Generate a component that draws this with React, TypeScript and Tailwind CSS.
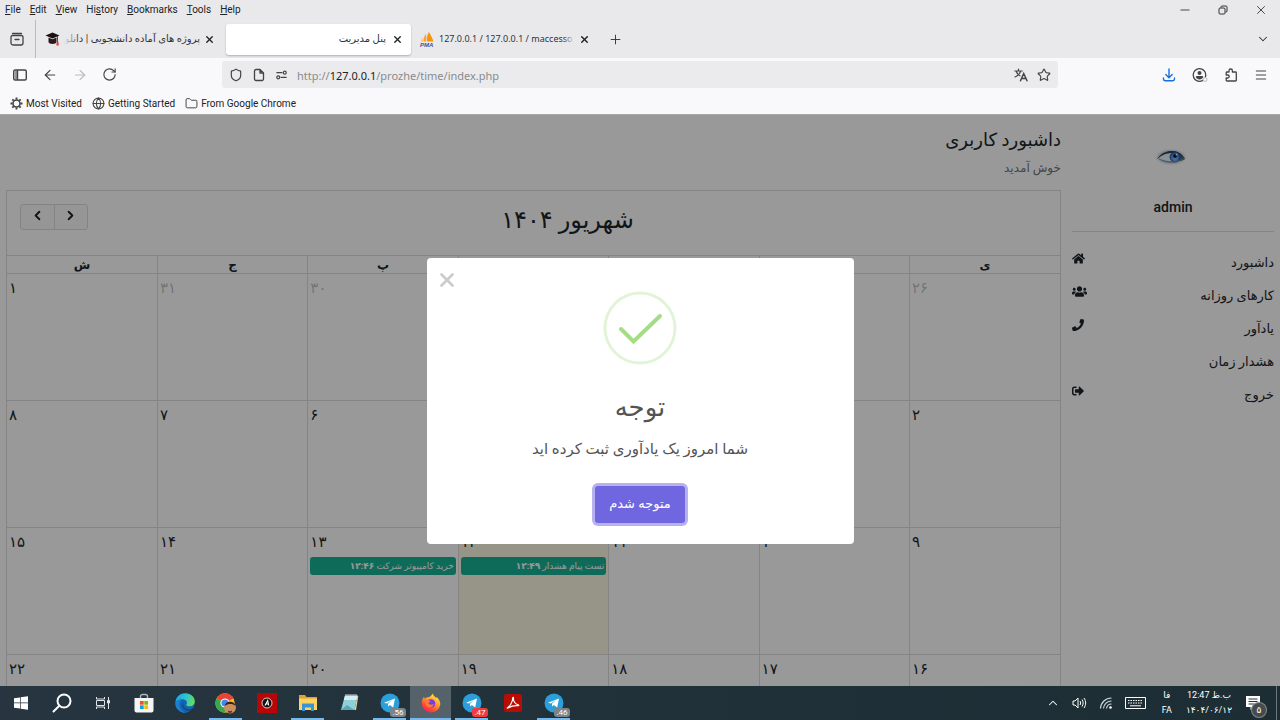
import type { ReactNode } from "react";
import { FaHome, FaUsers, FaPhone, FaSignOutAlt } from "react-icons/fa";
import {
  ArrowLeft,
  ArrowRight,
  ChevronDown,
  ChevronLeft,
  ChevronRight,
  ChevronUp,
  Folder,
  Globe,
  Menu,
  Minus,
  Plus,
  RotateCw,
  Shield,
  Star,
  X,
} from "lucide-react";

const uiFont = "font-['Roboto','DejaVu_Sans',sans-serif]";

const menus: [string, string, string][] = [
  ["", "F", "ile"],
  ["", "E", "dit"],
  ["", "V", "iew"],
  ["Hi", "s", "tory"],
  ["", "B", "ookmarks"],
  ["", "T", "ools"],
  ["", "H", "elp"],
];

function MenuBar() {
  return (
    <div className="flex h-5 shrink-0 items-center justify-between bg-[#e9e9ec]">
      <nav className="flex items-center gap-[9px] pl-[5px] text-[10px] leading-4 text-[#222]">
        {menus.map(([a, b, c]) => (
          <button key={b + c} type="button">
            {a}
            <span className="underline underline-offset-1">{b}</span>
            {c}
          </button>
        ))}
      </nav>
      <div className="flex items-center gap-6 pr-3 text-[#333]">
        <button type="button" aria-label="Minimize">
          <Minus size={14} strokeWidth={1.5} />
        </button>
        <button type="button" aria-label="Restore">
          <svg width="14" height="14" viewBox="0 0 14 14" fill="none" stroke="currentColor" strokeWidth="1">
            <rect x="3" y="5" width="6" height="6" rx="1" />
            <path d="M5 4.500V4a1 1 0 0 1 1-1h4a1 1 0 0 1 1 1v4a1 1 0 0 1-1 1H9.500" />
          </svg>
        </button>
        <button type="button" aria-label="Close window">
          <X size={14} strokeWidth={1.5} />
        </button>
      </div>
    </div>
  );
}

function TabClose() {
  return (
    <button type="button" aria-label="Close tab" className="shrink-0 text-[#222]">
      <X size={11} strokeWidth={3} />
    </button>
  );
}

function TabBar() {
  return (
    <div className="flex h-[38px] shrink-0 items-center bg-[#e9e9ec] text-[10px] text-[#333]">
      <button type="button" aria-label="Recent tabs" className="flex h-full w-9 items-center justify-center border-r border-[#bbb] pr-0.5">
        <svg width="16" height="16" viewBox="0 0 16 16" fill="none" stroke="#444" strokeWidth="1.300">
          <path d="M3.500 2.500h9M2 6a1.500 1.500 0 0 1 1.500-1.500h9A1.500 1.500 0 0 1 14 6v6a2 2 0 0 1-2 2H4a2 2 0 0 1-2-2ZM6 8.500h4" strokeLinecap="round" />
        </svg>
      </button>
      <div className="flex h-8 w-[190px] items-center gap-1 pr-[11px] pl-[9px]">
        <svg width="15" height="14" viewBox="0 0 15 14" className="shrink-0">
          <path d="M7.500.5 14.500 3.500 7.500 6.500.5 3.500Z" fill="#1b1214" />
          <path d="M3.500 5.500v4.500c0 2.500 8 2.500 8 0V5.500l-4 1.800Z" fill="#2a1a1c" />
          <path d="M12.500 4v6" stroke="#b02323" strokeWidth="1" />
          <path d="M11.800 9.500h1.600l.4 4h-2.400Z" fill="#e03a3a" />
        </svg>
        <span dir="rtl" className="relative min-w-0 flex-1 leading-4 whitespace-nowrap">
          پروژه های آماده دانشجویی | دانلو
          <span className="absolute inset-y-0 left-0 w-4 bg-linear-to-r from-[#e9e9ec] to-transparent" />
        </span>
        <TabClose />
      </div>
      <div className="flex h-[31px] w-[185px] items-center gap-1 rounded-[3px] bg-white px-2 shadow-[0_1px_2px_rgba(0,0,0,0.25)]">
        <span dir="rtl" className="min-w-0 flex-1 px-0.5 leading-4">
          پنل مدیریت
        </span>
        <TabClose />
      </div>
      <div className="flex h-8 w-[187px] items-center gap-1 px-2">
        <svg width="16" height="16" viewBox="0 0 16 16" className="shrink-0">
          <path d="M4.500 10.500C4.500 7 5.500 4.500 7 3c.5 2.500.5 5 .2 7.500Z" fill="#f9a13a" />
          <path d="M8 10.500C7.800 6 8.500 3 10 1c1.500 3 3.500 6 4.500 9.500Z" fill="#f89406" />
          <path d="M1.500 10.500 4 6.500v4Z" fill="#fbc277" />
          <text x="1" y="15.500" fontSize="6" fontWeight="700" fontStyle="italic" fill="#4a4f8c" fontFamily="Liberation Sans">
            PMA
          </text>
        </svg>
        <span className="relative min-w-0 flex-1 font-['Noto_Sans',sans-serif] text-[9px] leading-4 whitespace-nowrap">
          127.0.0.1 / 127.0.0.1 / maccesso
          <span className="absolute inset-y-0 right-0 w-3 bg-linear-to-l from-[#e9e9ec] to-transparent" />
        </span>
        <TabClose />
      </div>
      <button type="button" aria-label="New tab" className="ml-2.5">
        <Plus size={15} strokeWidth={1.5} />
      </button>
      <button type="button" aria-label="List all tabs" className="mr-2.5 ml-auto">
        <ChevronDown size={14} strokeWidth={1.8} />
      </button>
    </div>
  );
}

function NavBar() {
  return (
    <div className="flex h-[33px] shrink-0 items-center bg-[#f9f9fb] text-[#444]">
      <div className="flex w-[222px] shrink-0 items-center gap-3.5 pl-3">
        <button type="button" aria-label="Sidebar">
          <svg width="16" height="16" viewBox="0 0 16 16" fill="none" stroke="#444" strokeWidth="1.400">
            <rect x="1.700" y="3" width="12.600" height="10" rx="1.500" />
            <path d="M2.500 4h2.500v8H2.500Z" fill="#999" stroke="none" />
            <path d="M5.500 3v10" />
          </svg>
        </button>
        <button type="button" aria-label="Back">
          <ArrowLeft size={16} strokeWidth={1.8} />
        </button>
        <button type="button" aria-label="Forward" className="text-[#bbb]">
          <ArrowRight size={16} strokeWidth={1.8} />
        </button>
        <button type="button" aria-label="Reload">
          <RotateCw size={15} strokeWidth={1.8} />
        </button>
      </div>
      <div className="flex h-[27px] min-w-0 flex-1 items-center gap-[9px] rounded-[3px] bg-[#ebebed] px-[7px]">
        <Shield size={14} strokeWidth={2} className="shrink-0" />
        <svg width="14" height="14" viewBox="0 0 14 14" fill="none" stroke="currentColor" strokeWidth="1.300" strokeLinejoin="round" className="shrink-0">
          <path d="M8 1.500H4a1.500 1.500 0 0 0-1.500 1.500v8A1.500 1.500 0 0 0 4 12.500h6a1.500 1.500 0 0 0 1.500-1.500V5ZM8 1.500V5h3.500" />
        </svg>
        <svg width="13" height="14" viewBox="0 0 14 14" fill="none" stroke="currentColor" strokeWidth="1.300" className="shrink-0">
          <path d="M1.500 4.500H8M6 9.500h6.500" />
          <circle cx="10.500" cy="4.500" r="1.600" />
          <circle cx="3.500" cy="9.500" r="1.600" />
        </svg>
        <div className="min-w-0 flex-1 pt-0.5 font-['Noto_Sans',sans-serif] text-[11px] leading-5 text-[#8a8a8e]">
          http://<span className="text-[#222]">127.0.0.1</span>/prozhe/time/index.php
        </div>
        <button type="button" aria-label="Translate page" className="shrink-0">
          <svg width="14" height="14" viewBox="0 0 14 14" fill="none" stroke="currentColor" strokeWidth="1.200" strokeLinecap="round">
            <path d="M.8 3h7.400M4.500 1.200V3M6.700 3.200C6 5.500 3.700 7.800 1 9M2.400 3.500C3 5.300 4.500 7 6 7.800" />
            <path d="M6.500 12.800 9.700 5.500l3.300 7.300M7.700 10.500h4.100" strokeWidth="1.500" />
          </svg>
        </button>
        <button type="button" aria-label="Bookmark page" className="shrink-0">
          <Star size={14} strokeWidth={2} />
        </button>
      </div>
      <div className="flex w-[222px] shrink-0 items-center justify-end gap-4 pr-3">
        <button type="button" aria-label="Downloads">
          <svg width="14" height="14" viewBox="0 0 14 14" fill="none" stroke="#1a6fe0" strokeWidth="1.400" strokeLinecap="round" strokeLinejoin="round">
            <path d="M7 1v8.500M3.800 6.500 7 9.700l3.200-3.200M1.500 10v1a1.700 1.700 0 0 0 1.700 1.700h7.600a1.700 1.700 0 0 0 1.700-1.700v-1" />
          </svg>
        </button>
        <button type="button" aria-label="Account">
          <svg width="16" height="16" viewBox="0 0 16 16" fill="none" stroke="#444" strokeWidth="1.300">
            <circle cx="7.500" cy="8" r="6.300" />
            <circle cx="7.500" cy="6" r="2" fill="#444" stroke="none" />
            <path d="M3.800 10a1 1 0 0 1 1-1h5.400a1 1 0 0 1 1 1c-.5 1.500-2 2.500-3.700 2.500S4.300 11.500 3.800 10Z" fill="#444" stroke="none" />
            <circle cx="13" cy="12.500" r="2" fill="#f9f9fb" stroke="#bbb" strokeWidth="1" />
          </svg>
        </button>
        <button type="button" aria-label="Extensions">
          <svg width="14" height="14" viewBox="0 0 14 14" fill="none" stroke="#444" strokeWidth="1.300" strokeLinejoin="round">
            <path d="M5 4V2.700a1.700 1.700 0 0 1 3.400 0V4h3.100a.8.8 0 0 1 .8.8v7.400a.8.8 0 0 1-.8.8H3a.8.8 0 0 1-.8-.8V10h1.500a1.500 1.500 0 0 0 0-3H2.200V4.800A.8.8 0 0 1 3 4Z" />
          </svg>
        </button>
        <button type="button" aria-label="Application menu">
          <Menu size={14} strokeWidth={1.8} />
        </button>
      </div>
    </div>
  );
}

function GearIcon() {
  return (
    <svg width="13" height="13" viewBox="0 0 13 13" fill="none" stroke="#444">
      <circle cx="6.500" cy="6.500" r="3.500" strokeWidth="1.600" />
      <path d="M6.500.5v2M6.500 10.500v2M.5 6.500h2M10.500 6.500h2M2.300 2.300l1.400 1.400M9.300 9.300l1.400 1.400M10.700 2.300 9.300 3.700M3.700 9.300l-1.400 1.400" strokeWidth="1.900" />
    </svg>
  );
}

function BookmarkBar() {
  const items: [ReactNode, string][] = [
    [<GearIcon />, "Most Visited"],
    [<Globe size={13} strokeWidth={2} color="#444" />, "Getting Started"],
    [<Folder size={13} strokeWidth={1.8} color="#444" />, "From Google Chrome"],
  ];
  return (
    <div className="flex h-6 shrink-0 items-center gap-2.5 border-b border-[#aaa] bg-[#f9f9fb] pt-0.5 pl-2.5 text-[10px] text-[#222]">
      {items.map(([icon, label]) => (
        <a key={label} href="#" className="flex items-center gap-[3px] leading-4">
          {icon}
          {label}
        </a>
      ))}
    </div>
  );
}

const weekdays = ["ش", "ج", "پ", "چ", "س", "د", "ی"];
const weeks = [
  ["۱", "۳۱", "۳۰", "۲۹", "۲۸", "۲۷", "۲۶"],
  ["۸", "۷", "۶", "۵", "۴", "۳", "۲"],
  ["۱۵", "۱۴", "۱۳", "۱۲", "۱۱", "۱۰", "۹"],
  ["۲۲", "۲۱", "۲۰", "۱۹", "۱۸", "۱۷", "۱۶"],
];
const events: Record<string, [string, string]> = {
  "۱۳": ["خرید کامپیوتر شرکت", "۱۲:۴۶"],
  "۱۲": ["تست پیام هشدار", "۱۲:۴۹"],
};

function Calendar() {
  return (
    <section className="border border-b-0 border-[#ddd]">
      <div className="flex h-16 items-start px-[13px] pt-[13px]">
        <div className="flex h-[26px] w-17 shrink-0 overflow-hidden rounded-[3px] border border-[#ddd] bg-[#fbfbfb] text-[#222]">
          <button type="button" aria-label="Previous month" className="flex flex-1 items-center justify-center border-r border-[#ddd] pb-1">
            <ChevronLeft size={15} strokeWidth={3} />
          </button>
          <button type="button" aria-label="Next month" className="flex flex-1 items-center justify-center pb-1">
            <ChevronRight size={15} strokeWidth={3} />
          </button>
        </div>
        <h2 dir="rtl" className="flex-1 text-center text-[24px] leading-8 text-[#212529]">
          شهریور ۱۴۰۴
        </h2>
      </div>
      <table className="w-full table-fixed border-collapse text-[#212529]">
        <thead>
          <tr className="h-[18px]">
            {weekdays.map((d) => (
              <th key={d} className="border border-[#ddd] p-0 text-[12px] leading-4 font-bold first:border-l-0 last:border-r-0">
                {d}
              </th>
            ))}
          </tr>
        </thead>
        <tbody>
          {weeks.map((week, w) => (
            <tr key={w} className="h-[127px]">
              {week.map((day, i) => (
                <td
                  key={day}
                  className={`border border-[#ddd] px-0.5 pt-1 pb-0 align-top first:border-l-0 last:border-r-0 ${day === "۱۲" ? "bg-[#fcf8e3]" : ""}`}
                >
                  <div className={`text-[15px] leading-5 ${w === 0 && i > 0 ? "text-[#212529]/30" : ""}`}>{day}</div>
                  {events[day] && (
                    <a
                      href="#"
                      dir="rtl"
                      className="mt-[5px] block h-[18px] overflow-hidden rounded-[3px] bg-[#1ab394] px-0.5 text-[9px] leading-[18px] whitespace-nowrap text-white"
                    >
                      {events[day][0]} <b>{events[day][1]}</b>
                    </a>
                  )}
                </td>
              ))}
            </tr>
          ))}
        </tbody>
      </table>
    </section>
  );
}

function EyeAvatar() {
  return (
    <svg width="40" height="24" viewBox="0 0 40 24" className="block">
      <defs>
        <radialGradient id="lid" cx="50%" cy="50%" r="50%">
          <stop offset="0" stopColor="#5d7f9e" />
          <stop offset="0.6" stopColor="#8ea9bf" stopOpacity="0.8" />
          <stop offset="1" stopColor="#fff" stopOpacity="0" />
        </radialGradient>
        <radialGradient id="iris" cx="50%" cy="65%" r="50%">
          <stop offset="0" stopColor="#8cc4ff" />
          <stop offset="1" stopColor="#3a7ad8" />
        </radialGradient>
      </defs>
      <ellipse cx="18" cy="12" rx="17" ry="9" fill="url(#lid)" />
      <path d="M6 13C10 8.500 14 7.500 20 7.500c6 0 9 2.500 10.500 6-5 3.500-18 4-24.500-.5Z" fill="#e9f1f8" />
      <path d="M26 8.500c3 1 5 3 6 5.500-2 1.500-4 2-6 2.200Z" fill="#4c6580" />
      <path d="M3.500 14.500C8 8 14 5.500 20 6c6 .5 9 3 11 7.500-3-3.500-6-5.500-11-5.500C13 8 9 10 3.500 14.500Z" fill="#2c4257" />
      <circle cx="22" cy="12" r="5" fill="url(#iris)" stroke="#24487c" strokeWidth="0.800" />
      <circle cx="22" cy="11" r="1.900" fill="#0c1c38" />
      <circle cx="23.500" cy="9.500" r="0.900" fill="#fff" />
      <path d="M6 14c7 4 18 4 25-.5" fill="none" stroke="#7990a5" strokeWidth="0.900" />
    </svg>
  );
}

const links: [string, ReactNode][] = [
  ["داشبورد", <FaHome size={13} />],
  ["کارهای روزانه", <FaUsers size={15} />],
  ["یادآور", <FaPhone size={12} />],
  ["هشدار زمان", null],
  ["خروج", <FaSignOutAlt size={12} />],
];

function Sidebar() {
  return (
    <aside className="w-[214px] shrink-0 px-1.5 text-[#212529]">
      <div className="flex flex-col items-center border-b border-[#ddd] pt-[30px] pb-3.5">
        <EyeAvatar />
        <p className="mt-7 text-[14px] leading-5 font-medium">admin</p>
      </div>
      <ul className="pt-3.5">
        {links.map(([label, icon]) => (
          <li key={label}>
            <a href="#" dir="rtl" className="flex h-[33px] items-center justify-between text-[13px] leading-5">
              {label}
              <span className="pb-2">{icon}</span>
            </a>
          </li>
        ))}
      </ul>
    </aside>
  );
}

function Alert() {
  return (
    <div className="absolute inset-0 flex items-center justify-center bg-black/40">
      <div
        role="alertdialog"
        aria-labelledby="alert-title"
        dir="rtl"
        className="relative flex w-[427px] flex-col items-center rounded-[4px] bg-white px-4 pt-[33px] pb-[21px] text-[#545454]"
      >
        <button type="button" aria-label="بستن" className="absolute top-3.5 left-3">
          <svg width="16" height="16" viewBox="0 0 16 16" stroke="#ccc" strokeWidth="2.800">
            <path d="M2.500 2.500l11 11M13.500 2.500l-11 11" strokeLinecap="round" />
          </svg>
        </button>
        <svg width="74" height="74" viewBox="0 0 74 74" fill="none">
          <circle cx="37" cy="37" r="35" stroke="#a5dc86" strokeOpacity="0.32" strokeWidth="3" />
          <path d="M18 38l12.500 12.500L57 25" stroke="#a5dc86" strokeWidth="4" strokeLinecap="round" strokeLinejoin="miter" />
        </svg>
        <h2 id="alert-title" className="mt-6 text-[26px] leading-9">
          توجه
        </h2>
        <p className="mt-3 text-[15px] leading-6">شما امروز یک یادآوری ثبت کرده اید</p>
        <button
          type="button"
          className="mt-[25px] h-[37px] rounded-[3px] bg-[#7066e0] px-3.5 text-[13px] leading-5 font-medium text-white shadow-[0_0_0_3px_rgba(112,102,224,0.5)]"
        >
          متوجه شدم
        </button>
      </div>
    </div>
  );
}

function Telegram({ count, red }: { count: string; red?: boolean }) {
  return (
    <span className="relative">
      <svg width="20" height="20" viewBox="0 0 20 20">
        <circle cx="10" cy="10" r="9.500" fill="#2a9fda" />
        <path d="m4 9.800 11-4.400-1.800 9-3.300-2.400-1.700 1.600-.3-2.800 4.200-3.800-5.300 3.400Z" fill="#fff" />
      </svg>
      <span
        className={`absolute -right-1.5 -bottom-1 rounded-[3px] px-0.5 text-[8px] leading-[9px] text-white ${red ? "bg-[#ee3b3b]" : "bg-[#7d8488]"}`}
      >
        {count}
      </span>
    </span>
  );
}

const apps: { name: string; icon: ReactNode; open?: boolean; active?: boolean }[] = [
  {
    name: "Start",
    icon: (
      <svg width="16" height="16" viewBox="0 0 16 16" fill="#fff">
        <path d="M1 3.200 7 2.400v5.200H1ZM7.700 2.300 15 1.300v6.300H7.700ZM1 8.300h6v5.200l-6-.8ZM7.700 8.300H15v6.400l-7.300-1Z" />
      </svg>
    ),
  },
  {
    name: "Search",
    icon: (
      <svg width="20" height="20" viewBox="0 0 20 20" fill="none" stroke="#fff" strokeWidth="2" strokeLinecap="round">
        <circle cx="12" cy="8" r="6.500" />
        <path d="M7.300 12.800 1.500 18.500" />
      </svg>
    ),
  },
  {
    name: "Task View",
    icon: (
      <svg width="16" height="16" viewBox="0 0 16 16" fill="none" stroke="#dfe5e8" strokeWidth="1">
        <path d="M1.500 2v2h8V2M1.500 14v-2h8V14M1.500 5.500h8v5h-8ZM13.500 2v12" />
        <path d="M12.500 5.500h2v2.500h-2Z" fill="#dfe5e8" />
      </svg>
    ),
  },
  {
    name: "Microsoft Store",
    icon: (
      <svg width="20" height="20" viewBox="0 0 20 20">
        <path d="M6.500 6V3.500a2 2 0 0 1 2-2h3a2 2 0 0 1 2 2V6" fill="none" stroke="#a9b7bf" strokeWidth="1.400" />
        <path d="M.5 5h19v12.500a2 2 0 0 1-2 2h-15a2 2 0 0 1-2-2Z" fill="#f5f5f5" />
        <path d="M6 8h3.700v3.700H6Z" fill="#f25022" />
        <path d="M10.300 8H14v3.700h-3.700Z" fill="#7fba00" />
        <path d="M6 12.300h3.700V16H6Z" fill="#00a4ef" />
        <path d="M10.300 12.300H14V16h-3.700Z" fill="#ffb900" />
      </svg>
    ),
  },
  {
    name: "Edge",
    icon: (
      <svg width="20" height="20" viewBox="0 0 20 20">
        <defs>
          <linearGradient id="edgeTop" x1="0" x2="1" y1="0.3" y2="0.6">
            <stop offset="0" stopColor="#1fa3e8" />
            <stop offset="0.5" stopColor="#2fc4cf" />
            <stop offset="1" stopColor="#66df50" />
          </linearGradient>
        </defs>
        <circle cx="10" cy="10" r="9.700" fill="#0f64b8" />
        <path d="M.4 9C1.200 3.700 5.300.3 10.300.3c5.800 0 9.500 4 9.500 8 0 3.300-2.400 5-5.300 5-2 0-3.300-.7-3.300-1.300 0-.5.8-.9.8-2.200 0-2-2-3.600-4.500-3.600C4.300 6.200 1.500 7.500.4 9Z" fill="url(#edgeTop)" />
        <path d="M.4 9C2 6.800 5 6.200 7.500 6.200c-2.500 1.200-3.300 3.600-3 6 .4 3.500 3 6.700 6.500 7.500C4.500 20-.5 15 .4 9Z" fill="#1b80d2" />
        <path d="M8.300 9c-1.500 4 2 7.500 6 7.200 1.600-.1 2.700-.6 3.700-1.200.6-.3 1 0 .6.700-.8 1-1.800 2-3 2.700C9.500 18 4.500 13.500 8.300 9Z" fill="#25333d" fillOpacity="0.550" />
      </svg>
    ),
  },
  {
    name: "Chrome",
    open: true,
    icon: (
      <svg width="22" height="21" viewBox="0 0 22 21">
        <circle cx="10" cy="10" r="9.700" fill="#fbc116" />
        <path d="M10 10 1.600 5.200A9.700 9.700 0 0 1 18.400 5.200Z" fill="#ea4335" />
        <path d="M10 10 1.600 5.200A9.700 9.700 0 0 0 9.500 19.700L13 13Z" fill="#34a853" />
        <path d="M10 5.200h8.400" stroke="#ea4335" strokeWidth="1" />
        <circle cx="10" cy="10" r="4.600" fill="#fff" />
        <circle cx="10" cy="10" r="3.600" fill="#4285f4" />
        <circle cx="15" cy="14.500" r="6" fill="#c9905f" />
        <path d="M9.500 13a5.700 5.700 0 0 1 11 0c-2-1.500-3-2-5-2s-4 .5-6 2Z" fill="#3b2417" />
        <path d="M13 17.500c1.300.8 2.700.8 4 0v1.800c-1.200.8-2.800.8-4 0Z" fill="#6a3d24" />
      </svg>
    ),
  },
  {
    name: "Media",
    icon: (
      <svg width="20" height="20" viewBox="0 0 20 20">
        <path d="M0 0h20v20H0Z" fill="#b80606" />
        <circle cx="10" cy="10" r="5" fill="#111" stroke="#e8d8d8" strokeWidth="0.900" />
        <path d="M8 12.500 10.700 7.500l1 5M9 11h2.500" fill="none" stroke="#fff" strokeWidth="1.100" />
      </svg>
    ),
  },
  {
    name: "File Explorer",
    open: true,
    icon: (
      <svg width="20" height="18" viewBox="0 0 20 18">
        <path d="M1 1h6l1.500 2H19v13H1Z" fill="#e0a42a" />
        <path d="M1 4.500h18V16H1Z" fill="#fcd462" />
        <path d="M4 17V9.500h12V17h-3v-3.500H7V17Z" fill="#3d92d6" />
      </svg>
    ),
  },
  {
    name: "Notepad",
    icon: (
      <svg width="20" height="20" viewBox="0 0 20 20">
        <path d="M6 2.500h12.500L15.500 17H2Z" fill="#8ecfd8" />
        <path d="M6 2.500h12.500l-1 4.500H4.800Z" fill="#d6eef0" />
        <path d="m2 17 6-5 7.500 5Z" fill="#5ba7b5" />
        <path d="m15.500 17 3-14.500.7 1L17 17Z" fill="#e9d9a6" />
        <path d="M6.500 1.500h11.500" stroke="#c8d0d2" strokeWidth="1" strokeDasharray="1 1" />
      </svg>
    ),
  },
  { name: "Telegram 1", open: true, icon: <Telegram count=".56" /> },
  {
    name: "Firefox",
    open: true,
    active: true,
    icon: (
      <svg width="20" height="20" viewBox="0 0 20 20">
        <defs>
          <linearGradient id="fox" x1="0.8" x2="0.2" y1="0" y2="1">
            <stop offset="0" stopColor="#fff04a" />
            <stop offset="0.4" stopColor="#ffa12b" />
            <stop offset="0.75" stopColor="#ff4638" />
            <stop offset="1" stopColor="#e8197e" />
          </linearGradient>
        </defs>
        <path d="M11.800.5c.2 2 1.800 2.700 3.200 4.200l1-.5c2.300 2 3.500 4.800 3.300 7.300A9.300 9.300 0 0 1 10 19.500 9.200 9.200 0 0 1 .7 10.300C.7 8 1.300 5.500 3 3.800l.8 1.900C5 4.500 6 4.300 7.500 4.300 9 3.800 10.700 2.500 11.800.5Z" fill="url(#fox)" />
        <circle cx="10" cy="10.500" r="4.300" fill="#7a3ae0" />
        <path d="M4 7c2-.5 4 .3 6 1.500-1.300.1-1.700 1-2.500 1.200.5 2.300 3.500 2.500 5.300 1.100C12.500 14 9.500 15.500 7 14 4.800 12.700 3.700 10 4 7Z" fill="#ff7a2e" />
      </svg>
    ),
  },
  { name: "Telegram 2", open: true, icon: <Telegram count=".47" red /> },
  {
    name: "Acrobat",
    icon: (
      <svg width="20" height="20" viewBox="0 0 20 20">
        <rect x="1" y="1" width="18" height="18" rx="2.500" fill="#b70d04" />
        <path d="M4.500 14.800c2-1 5-5.300 5.300-9.800.1-1 .9-.7.700.3-.4 2.700 1.500 5.700 4.700 6.500.9.300.7 1-.2.9-3.300-.3-6.500.3-9.500 2.100-.9.600-1.700.3-1 0Z" fill="none" stroke="#fff" strokeWidth="1.200" strokeLinejoin="round" />
      </svg>
    ),
  },
  { name: "Telegram 3", open: true, icon: <Telegram count=".46" /> },
];

function Taskbar() {
  return (
    <footer className="flex h-[34px] shrink-0 items-stretch bg-linear-to-r from-[#26353f] to-[#1c2d34] text-white">
      {apps.map((app) => (
        <button
          key={app.name}
          type="button"
          aria-label={app.name}
          className={`relative flex w-[41px] shrink-0 items-center justify-center ${app.active ? "bg-[#566269]" : ""}`}
        >
          {app.icon}
          {app.open && <span className={`absolute bottom-0 h-0.5 bg-[#76b9ed] ${app.active ? "inset-x-0" : "inset-x-1"}`} />}
        </button>
      ))}
      <div className="ml-auto flex items-center pr-[3px]">
        <button type="button" aria-label="Show hidden icons" className="mr-3">
          <ChevronUp size={14} strokeWidth={1.8} />
        </button>
        <button type="button" aria-label="Volume" className="mr-3">
          <svg width="15" height="14" viewBox="0 0 15 14" fill="none" stroke="#fff" strokeWidth="1">
            <path d="M1 5h2l3-3v10L3 9H1ZM8 5c.8 1.200.8 2.800 0 4M10 3.500c1.500 2 1.500 5 0 7M12 2c2.200 3 2.200 7 0 10" />
          </svg>
        </button>
        <button type="button" aria-label="Network" className="mr-3">
          <svg width="14" height="14" viewBox="0 0 14 14" fill="none" stroke="#cfd6d9" strokeWidth="1.200">
            <path d="M1.500 12.500A11 11 0 0 1 12.500 2M4.500 12.500a8 8 0 0 1 8-7.500M7.500 12.500a5 5 0 0 1 5-4.500" />
            <circle cx="11.500" cy="11.500" r="1.300" fill="#fff" stroke="none" />
          </svg>
        </button>
        <button type="button" aria-label="Touch keyboard" className="mr-4">
          <svg width="21" height="12" viewBox="0 0 21 12" fill="none" stroke="#fff" strokeWidth="1">
            <path d="M.5.500h20v11H.5Z" />
            <path d="M3 3.500h15M3 6h15" strokeDasharray="1.500 1" />
            <path d="M5 8.800h11" />
          </svg>
        </button>
        <button type="button" className="mr-3.5 flex flex-col items-center text-[9px] leading-[15px]">
          <span>فا</span>
          <span>FA</span>
        </button>
        <button type="button" className="mr-3.5 flex flex-col items-center text-[9px] leading-[15px] whitespace-nowrap">
          <span>
            12:47 <bdi>ب.ظ</bdi>
          </span>
          <span>۱۴۰۴/۰۶/۱۲</span>
        </button>
        <button type="button" aria-label="Notifications" className="relative mr-4">
          <svg width="14" height="15" viewBox="0 0 14 15">
            <path d="M0 0h14v11H7l-2.500 3V11H0Z" fill="#fff" />
            <path d="M2.500 3h9M2.500 5.500h9M2.500 8h6" stroke="#26353f" strokeWidth="1" />
          </svg>
          <span className="absolute -right-1.5 -bottom-1.5 flex size-3.5 items-center justify-center rounded-full bg-[#444c50] text-[9px] leading-3 ring-1 ring-[#888]">
            ۵
          </span>
        </button>
        <span className="h-full w-px bg-[#6b777c]" />
      </div>
    </footer>
  );
}

export default function App() {
  return (
    <div className={`flex h-screen flex-col overflow-hidden ${uiFont}`}>
      <MenuBar />
      <TabBar />
      <NavBar />
      <BookmarkBar />
      <div className="relative min-h-0 flex-1 overflow-hidden bg-white">
        <div className="flex h-full">
          <main className="min-w-0 flex-1 pr-[5px] pl-1.5">
            <header dir="rtl" className="h-[75px] pt-[9px]">
              <h1 className="text-[18px] leading-8 text-[#212529]">داشبورد کاربری</h1>
              <p className="mt-0.5 text-[12px] leading-5 text-[#6c757d]">خوش آمدید</p>
            </header>
            <Calendar />
          </main>
          <Sidebar />
        </div>
        <Alert />
      </div>
      <Taskbar />
    </div>
  );
}
